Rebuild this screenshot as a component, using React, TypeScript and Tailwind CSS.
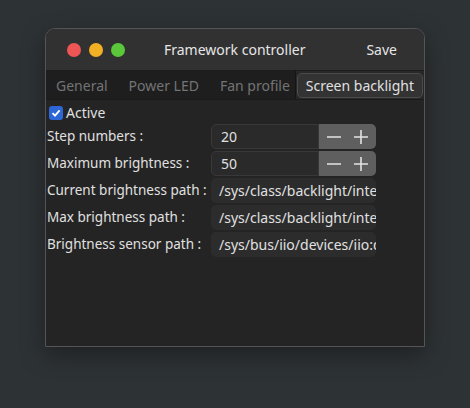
import React from "react";

const font = { fontFamily: '"Noto Sans", "DejaVu Sans", sans-serif' };

function Spin({ value }: { value: string }) {
	return (
		<div className="flex h-[25px]">
			<div className="flex w-[108px] items-center rounded-l-[5px] border border-[#383838] bg-[#2a2a2a] pl-[9px] text-[14px] text-[#e0e0e0]">
				{value}
			</div>
			<div className="flex w-[57px] items-center justify-between rounded-r-[5px] bg-[#5f5f5f] px-[8px]">
				<svg width="14" height="14" viewBox="0 0 14 14">
					<path d="M0 7h14" stroke="#e4e4e4" strokeWidth="1.6" />
				</svg>
				<svg width="14" height="14" viewBox="0 0 14 14">
					<path d="M0 7h14M7 0v14" stroke="#e4e4e4" strokeWidth="1.6" />
				</svg>
			</div>
		</div>
	);
}

function Path({ value }: { value: string }) {
	return (
		<div className="flex h-[25px] items-center overflow-hidden whitespace-nowrap rounded-[5px] bg-[#2c2c2c] pl-[8px] text-[14px] text-[#e0e0e0]">
			{value}
		</div>
	);
}

const rows: [string, React.ReactNode][] = [
	["Step numbers :", <Spin value="20" />],
	["Maximum brightness :", <Spin value="50" />],
	["Current brightness path :", <Path value="/sys/class/backlight/intel_backlight/brightness" />],
	["Max brightness path :", <Path value="/sys/class/backlight/intel_backlight/max_brightness" />],
	["Brightness sensor path :", <Path value="/sys/bus/iio/devices/iio:device0/in_illuminance_raw" />],
];

export default function App() {
	return (
		<div
			className="h-[408px] w-[470px] bg-[#2d3235] pl-[45px] pt-[28px]"
			style={font}
		>
			<div className="flex h-[319px] w-[380px] flex-col overflow-hidden rounded-t-[10px] border border-[#555] bg-[#242424] shadow-[0_8px_24px_rgba(0,0,0,0.35)]">
				<div className="flex h-[42px] items-center border-b border-[#1c1c1c] bg-[#313131] pl-[21px] pr-[27px]">
					<div className="flex gap-[8px]">
						<span className="h-[14px] w-[14px] rounded-full bg-[#ed5655]" />
						<span className="h-[14px] w-[14px] rounded-full bg-[#f2b124]" />
						<span className="h-[14px] w-[14px] rounded-full bg-[#5ac83a]" />
					</div>
					<div className="flex-1 pl-[39px] text-[14px] text-[#e6e6e6]">
						Framework controller
					</div>
					<div className="text-[14px] text-[#e6e6e6]">Save</div>
				</div>
				<div className="flex h-[29px] border-b border-[#1a1a1a] bg-[#1e1e1e] text-[14px]">
					<div className="flex flex-1 items-center gap-[21px] pl-[10px] text-[#747474]">
						<span>General</span>
						<span>Power LED</span>
						<span>Fan profile</span>
					</div>
					<div className="flex items-center border-l border-[#151515] bg-[#282828] px-[1px]">
						<div className="flex h-[25px] items-center rounded-[5px] border border-[#4b4b4b] bg-[#333] px-[8px] text-[#e0e0e0]">
							Screen backlight
						</div>
					</div>
				</div>
				<div className="flex flex-col pl-[1px] pt-[3px] text-[13.5px] text-[#e0e0e0]">
					<div className="flex h-[19px] items-center gap-[3px] pl-[2px] text-[14px]">
						<span className="flex h-[14px] w-[14px] items-center justify-center rounded-[3px] bg-[#2d66d6]">
							<svg width="10" height="10" viewBox="0 0 10 10">
								<path d="M1.5 5.2 4 7.6 8.6 2.4" fill="none" stroke="#fff" strokeWidth="1.8" />
							</svg>
						</span>
						<span>Active</span>
					</div>
					<div className="mt-[2px] flex flex-col gap-[2px]">
						{rows.map(([label, field]) => (
							<div key={label} className="grid grid-cols-[164px_165px] items-center">
								<span className="whitespace-nowrap">{label}</span>
								{field}
							</div>
						))}
					</div>
				</div>
			</div>
		</div>
	);
}
